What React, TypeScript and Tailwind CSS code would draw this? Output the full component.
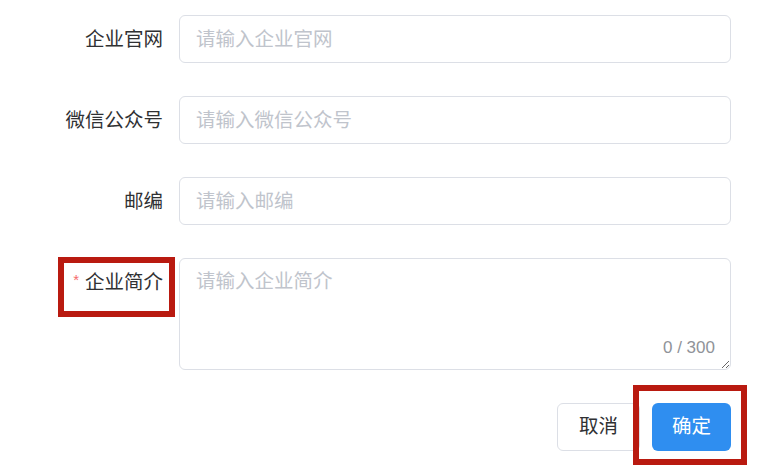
import { ReactNode } from "react";

const font = { fontFamily: '"Liberation Sans", "Noto Sans CJK SC", sans-serif' };

function FormRow({ label, required, children, boxed }: { label: string; required?: boolean; children: ReactNode; boxed?: boolean }) {
  return (
    <div className="relative flex items-start">
      <label className="w-[179px] shrink-0 pr-4 text-right text-[19.5px] leading-[48px] text-[#303133]">
        {required && <span className="mr-[6px] text-[15px] align-top leading-[44px] text-[#f56c6c]">*</span>}
        {label}
      </label>
      <div className="flex-1">{children}</div>
      {boxed && (
        <div className="pointer-events-none absolute left-[58px] top-[-1px] h-[60px] w-[117px] border-[6px] border-[#b91a10]" />
      )}
    </div>
  );
}

function TextInput({ placeholder }: { placeholder: string }) {
  return (
    <input
      placeholder={placeholder}
      className="h-[48px] w-full rounded-[6px] border border-[#dcdfe6] bg-white px-4 text-[19.5px] text-[#606266] outline-none placeholder:text-[#c0c4cc]"
    />
  );
}

export default function App() {
  return (
    <div className="h-[467px] w-[769px] overflow-hidden bg-white pt-[15px]" style={font}>
      <div className="flex w-[731px] flex-col gap-[33px]">
        <FormRow label="企业官网">
          <TextInput placeholder="请输入企业官网" />
        </FormRow>
        <FormRow label="微信公众号">
          <TextInput placeholder="请输入微信公众号" />
        </FormRow>
        <FormRow label="邮编">
          <TextInput placeholder="请输入邮编" />
        </FormRow>
        <FormRow label="企业简介" required boxed>
          <div className="relative">
            <textarea
              placeholder="请输入企业简介"
              className="block h-[112px] w-full resize-y rounded-[6px] border border-[#dcdfe6] bg-white px-4 py-[7.5px] text-[19.5px] leading-[29px] text-[#606266] outline-none placeholder:text-[#c0c4cc]"
            />
            <span className="absolute bottom-[10px] right-[16px] text-[17px] leading-[24px] text-[#909399]">0 / 300</span>
          </div>
        </FormRow>

        <div className="flex justify-end gap-[12px]">
          <button className="h-[48px] w-[83px] rounded-[6px] border border-[#dcdfe6] bg-white text-[19.5px] text-[#303133]">
            取消
          </button>
          <div className="relative">
            <button className="h-[48px] w-[79px] rounded-[6px] bg-[#2f8ef0] text-[19.5px] text-white">
              确定
            </button>
            <div className="pointer-events-none absolute left-[-19px] top-[-18px] h-[80px] w-[114px] border-[6px] border-[#b91a10]" />
          </div>
        </div>
      </div>
    </div>
  );
}
